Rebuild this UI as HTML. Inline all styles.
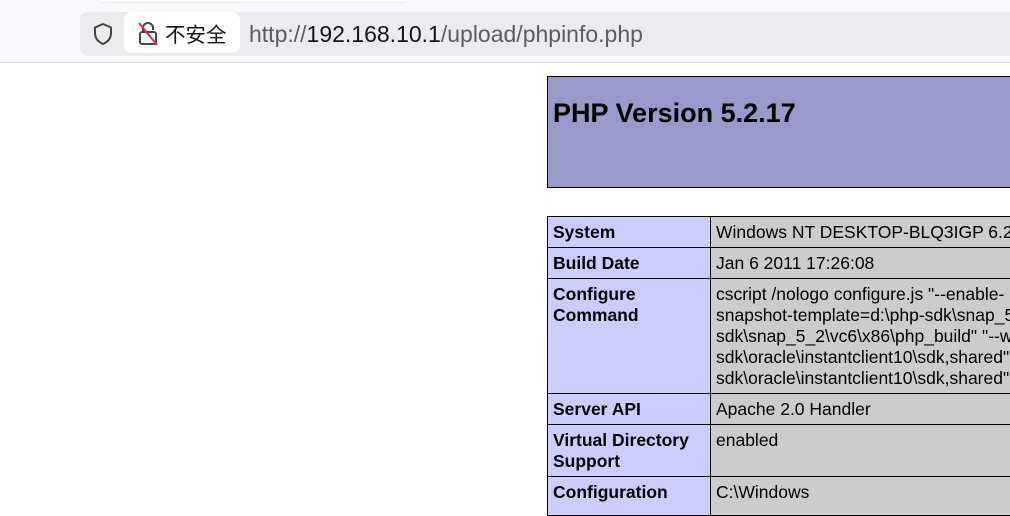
<!DOCTYPE html>
<html><head><meta charset="utf-8"><style>
*{margin:0;padding:0;box-sizing:border-box}
body{width:1010px;height:490px;overflow:hidden;background:#fff;font-family:"Liberation Sans",Arial,sans-serif;position:relative}
.bar{position:absolute;left:0;top:0;width:1010px;height:63px;background:#f9f9fb;border-bottom:1px solid #e1e1e3}
.tabedge{position:absolute;left:95px;top:-6px;width:316px;height:8px;background:#fff;border-radius:0 0 8px 8px;box-shadow:0 1px 1px rgba(0,0,0,.06)}
.url{position:absolute;left:80px;top:12px;width:940px;height:44px;background:#ececef;border-radius:8px}
.chip{position:absolute;left:124px;top:12px;width:116px;height:41px;background:#fff;border-radius:8px}
.u{position:absolute;left:249px;top:20px;font-size:23px;color:#5b5b66;white-space:nowrap;line-height:28px}
.u b{font-weight:normal;color:#15141a}
.ins{position:absolute;left:165px;top:20px;font-size:20.5px;color:#15141a;font-family:"Noto Sans CJK SC",sans-serif;line-height:26px}
.hdr{position:absolute;left:547px;top:76px;width:480px;height:112px;background:#9999cc;border:1px solid #000}
.hdr h1{position:absolute;left:5px;top:21px;font-size:27px;font-weight:bold;color:#000}
.c{position:absolute;border:1px solid #000;font-size:17.5px;line-height:21px;padding:5px 5px 3px;color:#000}
.l{background:#ccccff;font-weight:bold;left:547px;width:164px}
.v{background:#cccccc;left:710px;width:320px;white-space:nowrap;overflow:hidden}
</style></head><body>
<div class="bar"><div class="tabedge"></div>
<div class="url"></div>
<svg style="position:absolute;left:92px;top:22px" width="22" height="24" viewBox="0 0 22 24"><path d="M11 2 L19 5.5 V11 C19 16.5 15.5 20 11 22 C6.5 20 3 16.5 3 11 V5.5 Z" fill="none" stroke="#444" stroke-width="2" stroke-linejoin="round"/></svg>
<div class="chip"></div>
<svg style="position:absolute;left:136px;top:21px" width="24" height="26" viewBox="0 0 24 26"><path d="M7 11 V7 A5 5 0 0 1 17 7 V9" fill="none" stroke="#444" stroke-width="2"/><rect x="4" y="11" width="16" height="12" rx="2" fill="none" stroke="#444" stroke-width="2"/><line x1="3" y1="2" x2="21" y2="24" stroke="#e22850" stroke-width="2"/></svg>
<div class="ins">不安全</div>
<div class="u">http://<b>192.168.10.1</b>/upload/phpinfo.php</div>
</div>
<div class="hdr"><h1>PHP Version 5.2.17</h1></div>
<div class="c l" style="top:216px;height:32px">System</div>
<div class="c v" style="top:216px;height:32px">Windows NT DESKTOP-BLQ3IGP 6.2 build 9200</div>
<div class="c l" style="top:247px;height:32px">Build Date</div>
<div class="c v" style="top:247px;height:32px">Jan 6 2011 17:26:08</div>
<div class="c l" style="top:278px;height:116px">Configure<br>Command</div>
<div class="c v" style="top:278px;height:116px">cscript /nologo configure.js "--enable-<br>snapshot-template=d:\php-sdk\snap_5_2\vc6<br>sdk\snap_5_2\vc6\x86\php_build" "--with-<br>sdk\oracle\instantclient10\sdk,shared" "--<br>sdk\oracle\instantclient10\sdk,shared" "--</div>
<div class="c l" style="top:393px;height:32px">Server API</div>
<div class="c v" style="top:393px;height:32px">Apache 2.0 Handler</div>
<div class="c l" style="top:424px;height:53px">Virtual Directory<br>Support</div>
<div class="c v" style="top:424px;height:53px">enabled</div>
<div class="c l" style="top:476px;height:40px">Configuration</div>
<div class="c v" style="top:476px;height:40px">C:\Windows</div>
</body></html>
